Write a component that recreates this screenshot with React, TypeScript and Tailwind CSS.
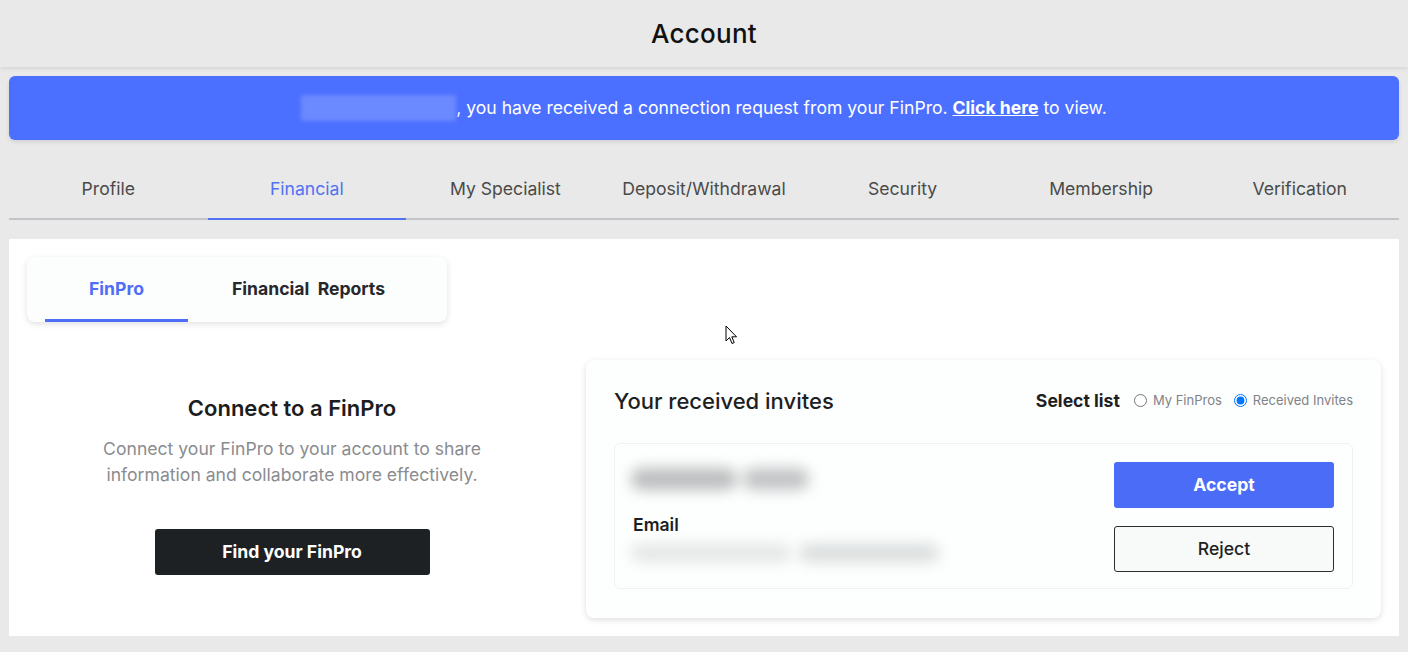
import React from "react";

const tabs = [
  "Profile",
  "Financial",
  "My Specialist",
  "Deposit/Withdrawal",
  "Security",
  "Membership",
  "Verification",
];

const App = () => {
  return (
    <div className="relative min-h-screen bg-[#e8e9e8] font-['Inter',sans-serif] text-[#1d1f22]">
      <header className="h-[67px] flex items-center justify-center bg-[#e8e9e8] shadow-[0_2px_4px_rgba(0,0,0,0.08)]">
        <h1 className="text-[26px] font-medium text-[#111] tracking-[0.01em]">Account</h1>
      </header>

      <div className="px-[9px]">
        <div className="mt-[9px] h-[64px] rounded-[6px] bg-[#4b6fff] shadow-[0_2px_4px_rgba(0,0,0,0.1)] flex items-center justify-center text-white text-[17.6px]">
          <span className="inline-block w-[155px] h-[26px] bg-[#6b8aff] blur-[2px]" />
          <span>, you have received a connection request from your FinPro.&nbsp;</span>
          <a href="#" className="font-bold underline">Click here</a>
          <span>&nbsp;to view.</span>
        </div>

        <nav className="mt-[20px] grid grid-cols-7 h-[60px] border-b-2 border-[#c3c4ca]">
          {tabs.map((t) => (
            <div
              key={t}
              className={
                t === "Financial"
                  ? "flex items-center justify-center text-[17.6px] text-[#5272f2] border-b-2 border-[#5272f2] -mb-[2px]"
                  : "flex items-center justify-center text-[17.6px] text-[#4a4a4a]"
              }
            >
              {t}
            </div>
          ))}
        </nav>

        <main className="mt-[19px] h-[397px] bg-white p-[18px]">
          <div className="w-[420px] h-[65px] rounded-[8px] bg-[#fcfdfd] shadow-[0_2px_6px_rgba(0,0,0,0.12)] flex px-[18px]">
            <div className="w-[143px] flex items-center justify-center text-[17.6px] font-bold text-[#4f6ef7] border-b-[3px] border-[#4f6ef7] pt-[3px]">
              FinPro
            </div>
            <div className="flex-1 flex items-center justify-center text-[17.6px] font-bold text-[#26282b]">
              Financial&nbsp; Reports
            </div>
          </div>

          <div className="flex items-start gap-[29px]">
            <section className="w-[530px] pt-[72px] flex flex-col items-center text-center">
              <h2 className="text-[22px] leading-[28px] font-semibold text-[#1b1d20]">Connect to a FinPro</h2>
              <p className="mt-[14px] text-[17.6px] leading-[26px] text-[#8a8c8f]">
                Connect your FinPro to your account to share
                <br />
                information and collaborate more effectively.
              </p>
              <button className="mt-[41px] w-[275px] h-[46px] rounded-[3px] bg-[#1e2124] text-white text-[17.6px] font-bold">
                Find your FinPro
              </button>
            </section>

            <section className="mt-[38px] w-[795px] h-[258px] rounded-[8px] bg-[#fdfefe] shadow-[0_2px_6px_rgba(0,0,0,0.13)] px-[28px] pt-[27px]">
              <div className="flex items-center justify-between h-[28px]">
                <h3 className="text-[22px] font-medium text-[#1d1f22]">Your received invites</h3>
                <div className="flex items-center">
                  <span className="text-[17.6px] font-bold text-[#1d1f22] mr-[14px]">Select list</span>
                  <label className="flex items-center text-[13px] text-[#808285] mr-[12px]">
                    <input type="radio" name="list" className="w-[13px] h-[13px] m-0 mr-[6px]" />
                    My FinPros
                  </label>
                  <label className="flex items-center text-[13px] text-[#808285]">
                    <input type="radio" name="list" defaultChecked className="w-[13px] h-[13px] m-0 mr-[6px]" />
                    Received Invites
                  </label>
                </div>
              </div>

              <div className="mt-[28px] h-[146px] rounded-[6px] border border-[#f0f2f2] bg-[#fdfefe] flex justify-between pl-[16px] pr-[18px] pt-[18px]">
                <div className="pt-[4px]">
                  <div className="w-[180px] h-[26px] flex gap-[6px] items-center blur-[7px]">
                    <span className="w-[106px] h-[22px] rounded-full bg-[#bcbdbe]" />
                    <span className="w-[66px] h-[22px] rounded-full bg-[#c2c3c4]" />
                  </div>
                  <div className="mt-[20px] ml-[2px] text-[17.6px] font-semibold text-[#1d1f22]">Email</div>
                  <div className="mt-[4px] w-[315px] h-[22px] flex gap-[8px] items-center blur-[7px]">
                    <span className="w-[160px] h-[18px] rounded-full bg-[#e4e6e6]" />
                    <span className="w-[140px] h-[18px] rounded-full bg-[#dadddd]" />
                  </div>
                </div>
                <div className="flex flex-col gap-[18px]">
                  <button className="w-[220px] h-[46px] rounded-[3px] bg-[#4b6cf7] text-white text-[17.6px] font-bold">
                    Accept
                  </button>
                  <button className="w-[220px] h-[46px] rounded-[3px] border border-[#2a2c2f] bg-[#f8faf9] text-[17.6px] font-medium text-[#1d1f22]">
                    Reject
                  </button>
                </div>
              </div>
            </section>
          </div>
        </main>
      </div>

      <svg
        className="absolute left-[725px] top-[325px]"
        width="13"
        height="20"
        viewBox="0 0 13 20"
      >
        <path
          d="M1 1 L1 16 L4.5 12.5 L7 18.5 L9.2 17.6 L6.8 11.8 L11.5 11.8 Z"
          fill="#fff"
          stroke="#000"
          strokeWidth="1"
          strokeLinejoin="round"
        />
      </svg>
    </div>
  );
};

export default App;
